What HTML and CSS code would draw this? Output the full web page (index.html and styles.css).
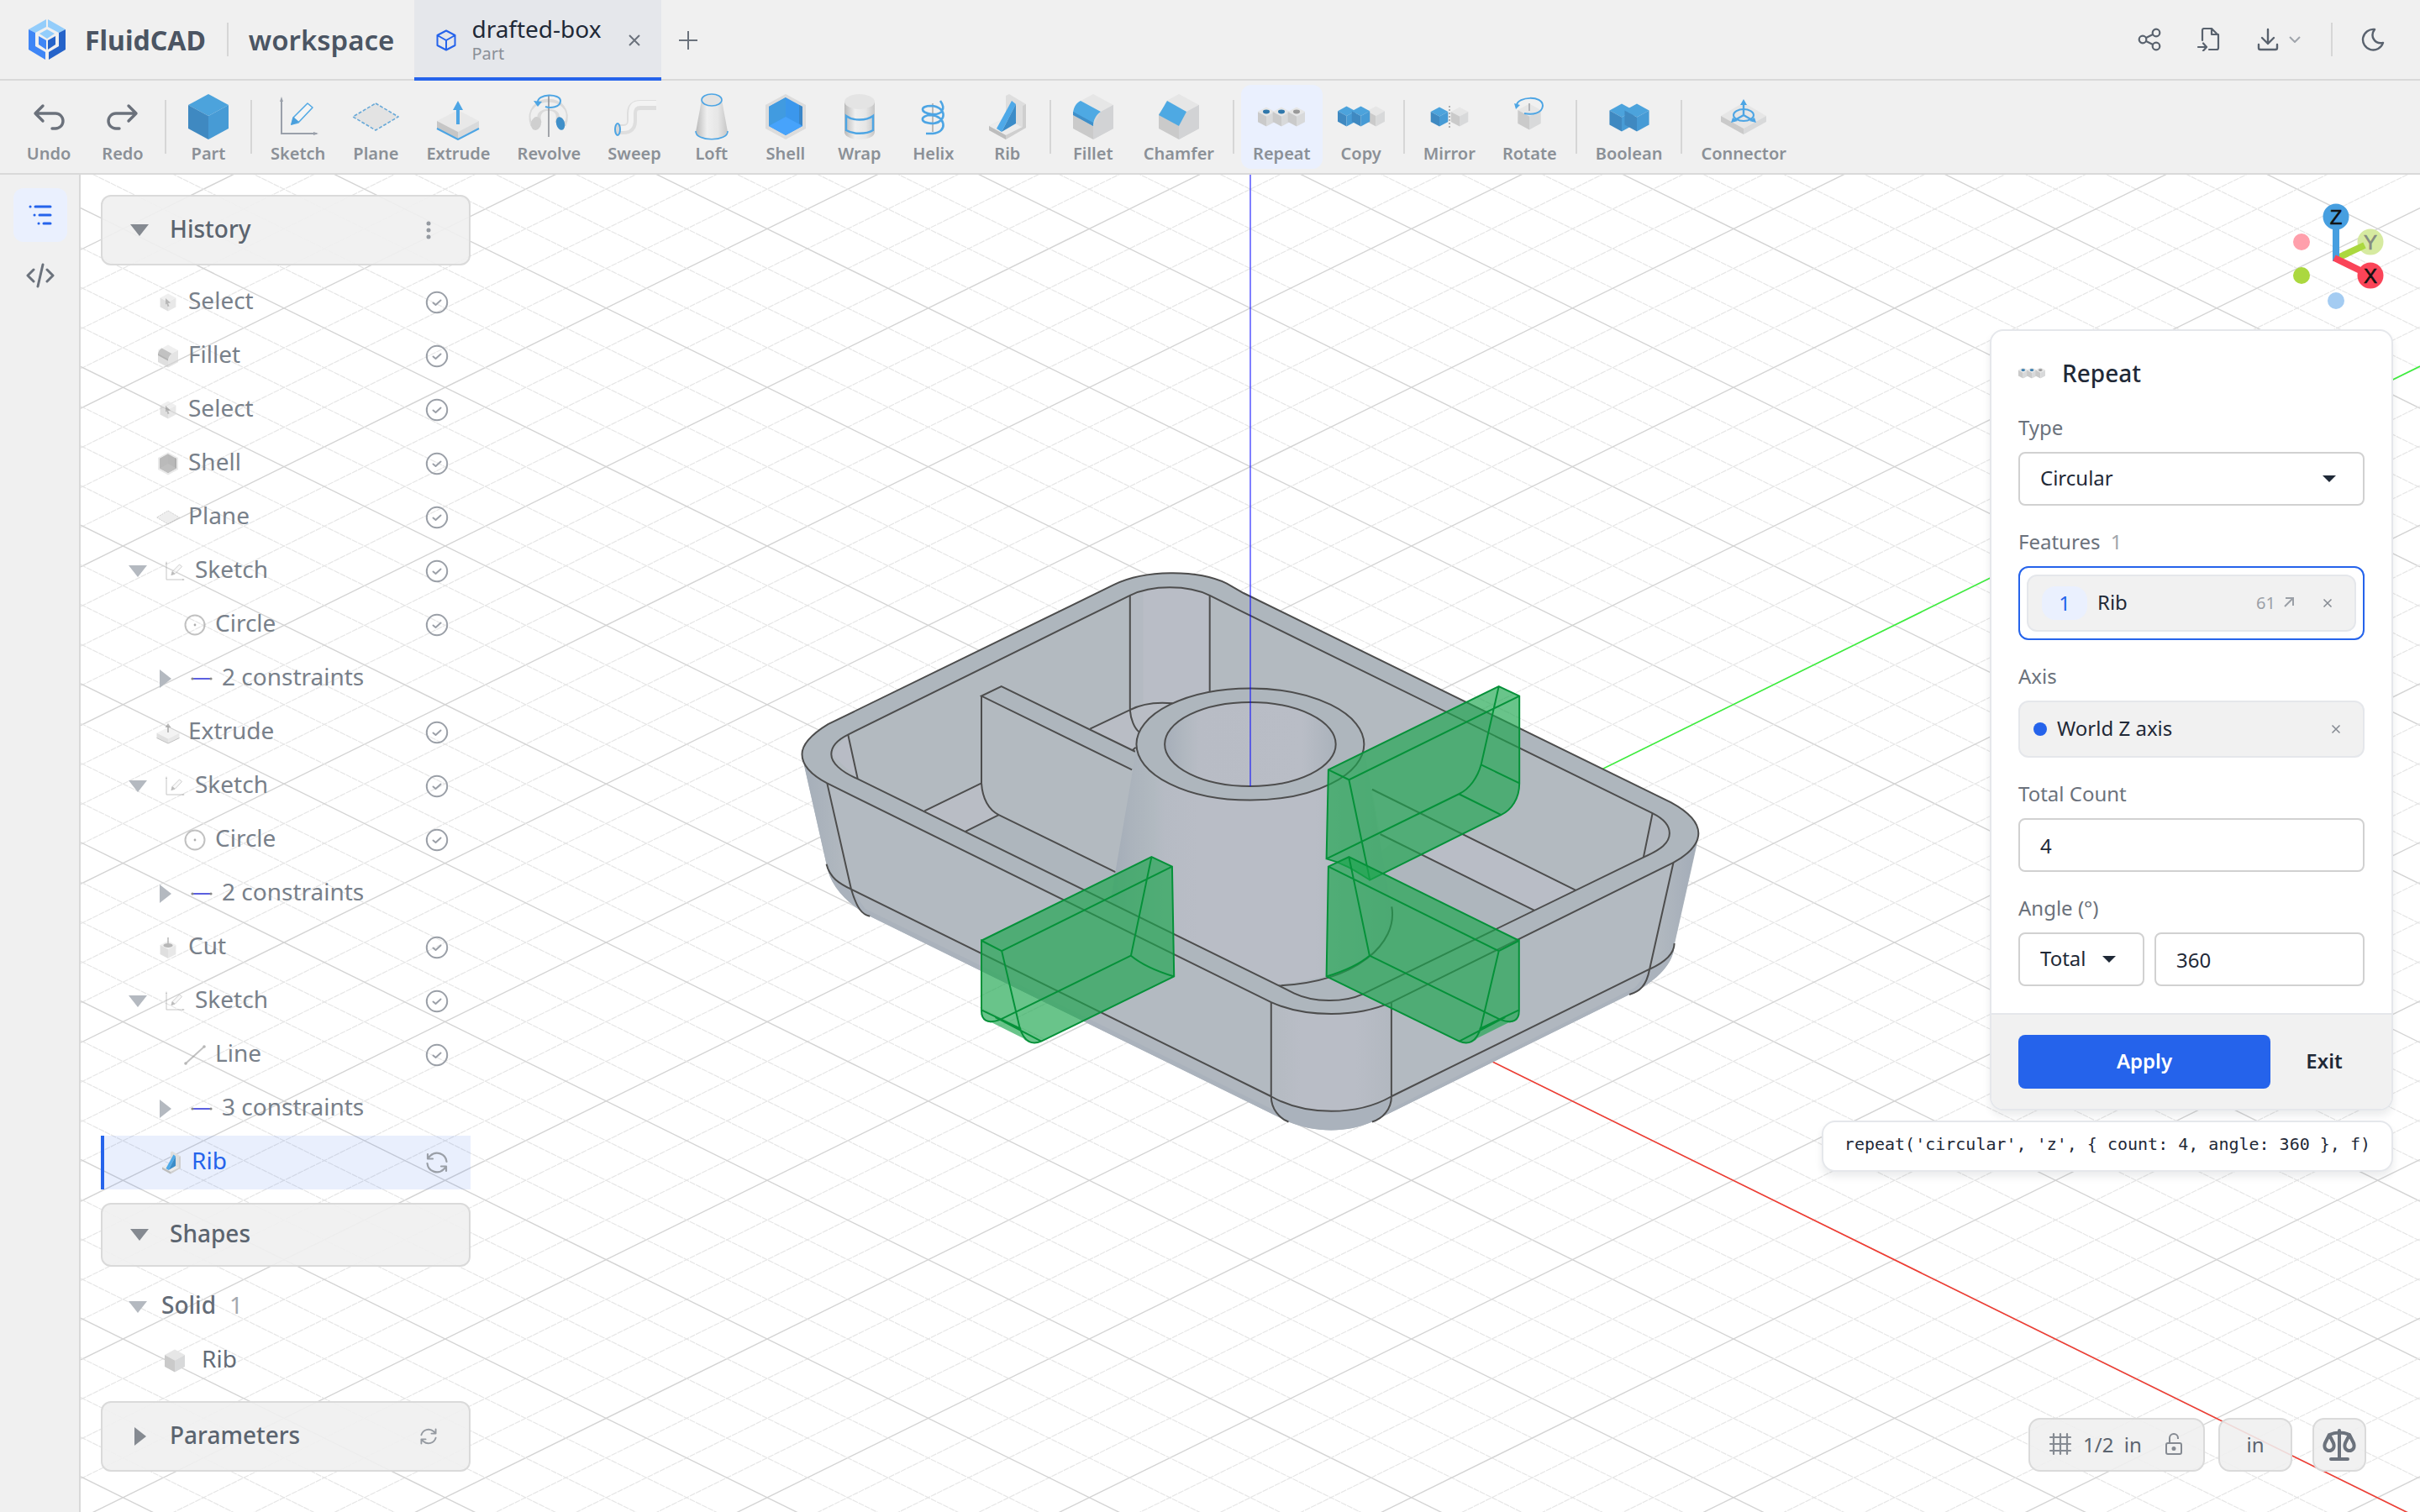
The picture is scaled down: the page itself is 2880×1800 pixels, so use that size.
FILE: index.html
```html
<!DOCTYPE html>
<html lang="en">
<head>
<meta charset="utf-8">
<title>FluidCAD – drafted-box</title>
<link rel="stylesheet" href="styles.css">
</head>
<body>
<svg class="defs" aria-hidden="true">
  <defs>
    <linearGradient id="metal" x1="0" x2="1" y1="0" y2="0"><stop offset="0" stop-color="#b9b9b9"/><stop offset=".35" stop-color="#efefef"/><stop offset=".7" stop-color="#e6e6e6"/><stop offset="1" stop-color="#c6c6c6"/></linearGradient>
    <symbol id="cube-blue" viewBox="0 0 56 56"><path fill="#4ca3dc" d="M28 1 52 14 28 27 4 14z"/><path fill="#3f89c1" d="M4 14 28 27V55L4 42z"/><path fill="#479bd5" d="M52 14 28 27V55L52 42z"/></symbol>
    <symbol id="cube-gray" viewBox="0 0 56 56"><path fill="#e6e6e6" d="M28 1 52 14 28 27 4 14z"/><path fill="#cacaca" d="M4 14 28 27V55L4 42z"/><path fill="#d8d9da" d="M52 14 28 27V55L52 42z"/></symbol>
    <symbol id="i-sketch" viewBox="0 0 56 56"><g fill="none" stroke="#9aa0aa" stroke-width="2"><path d="M8 8V48H50"/></g><path fill="#9aa0aa" d="M8 4 6 10h4zM52 48l-6-2v4z"/><path fill="#f4f4f4" stroke="#53a9e4" stroke-width="1.6" stroke-linejoin="round" d="M39 12 45 17 28 35 20 37 22 29z"/><path fill="#4a9fdc" d="M22 28 29 34 19 38z"/></symbol>
    <symbol id="i-plane" viewBox="0 0 56 56"><path fill="#e3e3e3" stroke="#69a9d8" stroke-width="1.6" stroke-dasharray="4 2" d="M28 12 55 28 28 44 1 28z"/></symbol>
    <symbol id="i-extrude" viewBox="0 0 56 56"><path fill="#e8e8e8" d="M28 20 53 33 28 46 3 33z"/><path fill="#c6c6c6" d="M3 33 28 46V55L3 42z"/><path fill="#d9dadb" d="M53 33 28 46V55L53 42z"/><path fill="none" stroke="#4da5e4" stroke-width="2" d="M3 42 28 55 53 42"/><path fill="#4da5e4" d="M26 37V20H22L28 9 34 20H30V37z"/></symbol>
    <symbol id="i-revolve" viewBox="0 0 56 56"><path fill="none" stroke="#dadada" stroke-width="14" d="M13 37C2 6 54 6 42 37"/><path fill="none" stroke="#efefef" stroke-width="8" d="M11 32C5 9 51 9 44 32"/><ellipse cx="13" cy="36" rx="6" ry="8" fill="#cfcfcf" transform="rotate(14 13 36)"/><ellipse cx="42" cy="36" rx="5" ry="8" fill="#3f8fc9" transform="rotate(-14 42 36)"/><path stroke="#8e9299" stroke-width="1.6" d="M28 2V52"/><path fill="none" stroke="#4da5e4" stroke-width="2" d="M15 11C14 0 42 0 42 9 42 17 30 18 24 16"/><path fill="#4da5e4" d="M10 9 20 10 15 16z"/></symbol>
    <symbol id="i-sweep" viewBox="0 0 56 56"><path fill="none" stroke="#dedede" stroke-width="12" d="M9 43H15Q25 43 25 33V24Q25 14 35 14H54"/><path fill="none" stroke="#f3f3f3" stroke-width="6" d="M9 42H15Q24 42 24 32V24Q24 12 35 12H54"/><ellipse cx="8" cy="43" rx="3" ry="7" fill="#d8d8d8" stroke="#4da5e4" stroke-width="2"/></symbol>
    <symbol id="i-loft" viewBox="0 0 56 56"><path fill="url(#metal)" d="M16 8 9 46C9 58 47 58 47 46L40 8z"/><path fill="none" stroke="#4da5e4" stroke-width="1.6" d="M9 45C8 58 48 58 47 45"/><ellipse cx="28" cy="8" rx="12" ry="7" fill="#e3e3e3" stroke="#4da5e4" stroke-width="1.6"/></symbol>
    <symbol id="i-shell" viewBox="0 0 56 56"><path fill="#dcdcdc" d="M28 1 52 14V42L28 55 4 42V14z"/><path fill="#3b97ec" d="M28 5 48 16V39L28 50 8 39V16z"/><path fill="#419be0" d="M28 5 8 16V39L28 28z"/><path fill="#47a3fb" d="M8 39 28 28 48 39 28 50z"/><path fill="#3a86c8" d="M48 16V39L44 36V14z"/></symbol>
    <symbol id="i-wrap" viewBox="0 0 56 56"><path fill="url(#metal)" d="M10 10V46C10 58 46 58 46 46V10z"/><ellipse cx="28" cy="10" rx="18" ry="9" fill="#e4e4e4"/><path fill="none" stroke="#4da5e4" stroke-width="2.4" d="M12 27C20 33 36 33 44 27V44C36 49 20 49 12 44z"/></symbol>
    <symbol id="i-helix" viewBox="0 0 56 56"><path stroke="#a3a3a3" stroke-width="1.4" d="M27 12V46"/><path fill="none" stroke="#4da5e4" stroke-width="2.6" d="M36 9C44 20 36 26 26 25 11 23 12 15 25 15 44 16 44 34 28 36 10 36 12 26 25 26 42 27 46 46 27 48H19"/></symbol>
    <symbol id="i-rib" viewBox="0 0 56 56"><path fill="#dedede" d="M26 3 30 1 50 13V41L26 55 6 44V39L26 29z"/><path fill="#ececec" d="M6 39 26 29 46 41 26 50z"/><path fill="#cfcfcf" d="M46 15 50 13V41L26 55V50L46 40z"/><path fill="#bdbdbd" d="M6 39 26 50V55L6 44z"/><path fill="#4ea9e8" d="M33 9 38 13 21 46 15 42z"/><path fill="#3b8cc8" d="M38 13V36L21 46z"/></symbol>
    <symbol id="i-fillet" viewBox="0 0 56 56"><use href="#cube-gray" width="56" height="56"/><path fill="#d2d3d5" d="M37 22 52 14V42L28 55V39z"/><path fill="#f0f0f0" d="M4 12 14 7 10 16 4 22z"/><path fill="#4ea9e3" d="M13 9 37 22C31 26 28 32 28 39L4 25C4 18 7 12 13 9z"/><path fill="#3f8fc9" d="M4 22 28 35V39L4 26z"/></symbol>
    <symbol id="i-chamfer" viewBox="0 0 56 56"><use href="#cube-gray" width="56" height="56"/><path fill="#d2d3d5" d="M37 22 52 14V42L28 55V39z"/><path fill="#f0f0f0" d="M4 12 14 7 8 20 4 25z"/><path fill="#4ea9e3" d="M14 9 37 22 28 39 4 26z"/></symbol>
    <symbol id="i-repeat" viewBox="0 0 56 56"><use href="#cube-gray" x="-2" y="16" width="24" height="24"/><use href="#cube-gray" x="16" y="16" width="24" height="24"/><use href="#cube-gray" x="34" y="16" width="24" height="24"/><ellipse cx="10" cy="22" rx="4" ry="2.4" fill="#2f77ab"/><ellipse cx="28" cy="22" rx="4" ry="2.4" fill="#2f77ab"/><ellipse cx="46" cy="22" rx="4" ry="2.4" fill="#999"/></symbol>
    <symbol id="i-copy" viewBox="0 0 56 56"><use href="#cube-gray" x="33" y="15" width="25" height="25"/><use href="#cube-blue" x="-2" y="15" width="25" height="25"/><use href="#cube-blue" x="15" y="15" width="25" height="25"/></symbol>
    <symbol id="i-mirror" viewBox="0 0 56 56"><use href="#cube-blue" x="4" y="16" width="24" height="24"/><use href="#cube-gray" x="28" y="16" width="24" height="24"/><path stroke="#b0b0b0" stroke-width="2" stroke-dasharray="2 2" d="M28 15V41"/></symbol>
    <symbol id="i-rotate" viewBox="0 0 56 56"><use href="#cube-gray" x="12" y="12" width="32" height="32"/><path stroke="#8e9299" stroke-width="1.2" d="M28 12V21"/><path fill="none" stroke="#4da5e4" stroke-width="2" d="M13 14C14 4 44 2 44 15 43 24 32 26 22 24"/><path fill="#4da5e4" d="M10 12 17 14 12 19z"/></symbol>
    <symbol id="i-boolean" viewBox="0 0 56 56"><use href="#cube-blue" x="2" y="12" width="34" height="34"/><use href="#cube-blue" x="20" y="12" width="34" height="34"/></symbol>
    <symbol id="i-connector" viewBox="0 0 56 56"><path fill="#e6e6e6" d="M28 11 55 27 28 42 1 27z"/><path fill="#cacaca" d="M1 27 28 42V49L1 34z"/><path fill="#d8d9da" d="M55 27 28 42V49L55 34z"/><g fill="none" stroke="#4da5e4" stroke-width="2"><ellipse cx="28" cy="26" rx="12" ry="7"/><path stroke-width="2.4" d="M28 12V26L16 33M28 26 40 33"/></g><path fill="#4da5e4" d="M28 7 24 14H32zM13 35 15 29 21 33zM43 35 35 33 41 29z"/></symbol>
    <symbol id="i-select" viewBox="0 0 56 56"><use href="#cube-gray" x="6" y="6" width="44" height="44"/><path fill="#888" d="M22 18 34 29 28 30 31 37 27 38 25 31 22 33z"/></symbol>
    <symbol id="i-cut" viewBox="0 0 56 56"><use href="#cube-gray" x="6" y="11" width="44" height="44"/><ellipse cx="28" cy="23" rx="11" ry="5" fill="#888"/><path stroke="#888" stroke-width="3" d="M28 4V20"/></symbol>
    <symbol id="i-extrude-small" viewBox="0 0 56 56"><path fill="#ececec" d="M28 16 55 29 28 43 1 29z"/><path fill="#cdcdcd" d="M1 29 28 43V54L1 41z"/><path fill="#d9dadb" d="M55 29 28 43V54L55 41z"/><path fill="none" stroke="#999" stroke-width="2" d="M1 41 28 54 55 41"/><path fill="#8e8e8e" d="M26 28V16H21L28 6 35 16H30V28z"/></symbol>
    <symbol id="i-circle" viewBox="0 0 28 28"><circle cx="14" cy="14" r="11.5" fill="none" stroke="#999" stroke-width="2"/><circle cx="14" cy="14" r="1.4" fill="#777"/></symbol>
    <symbol id="i-line" viewBox="0 0 28 28"><path stroke="#999" stroke-width="2" d="M3 24 25 4"/><circle cx="3" cy="24" r="1.8" fill="#888"/><circle cx="25" cy="4" r="1.8" fill="#888"/></symbol>
    <symbol id="i-cons" viewBox="0 0 28 28"><path stroke="#5b5fe0" stroke-width="2" d="M3 14H25"/><circle cx="3" cy="14" r="1.6" fill="#888"/><circle cx="25" cy="14" r="1.6" fill="#888"/></symbol>
    <symbol id="i-check" viewBox="0 0 28 28"><g fill="none" stroke="currentColor" stroke-width="2" stroke-linecap="round" stroke-linejoin="round"><circle cx="14" cy="14" r="12.2"/><path d="M9.500 14.500 12.500 17 18.500 11.500"/></g></symbol>
    <symbol id="i-refresh" viewBox="0 0 28 28"><g fill="none" stroke="currentColor" stroke-width="2.2" stroke-linecap="round" stroke-linejoin="round"><path d="M2.500 15A11.500 11.500 0 0 0 22 22L25 19M25.500 13A11.500 11.500 0 0 0 6 6L3 9M3 4V9.500H9M25 24V18.500H19"/></g></symbol>
    <symbol id="i-reload" viewBox="0 0 28 28"><g fill="none" stroke="currentColor" stroke-width="2.200" stroke-linecap="round" stroke-linejoin="round"><path d="M4 12A10.500 10.500 0 0 1 21 7L24 10M24 16A10.500 10.500 0 0 1 7 21L4 18M24 4V10H18M4 24V18H10"/></g></symbol>
    <symbol id="t-down" viewBox="0 0 22 14"><path fill="currentColor" d="M0 0H22L11 14z"/></symbol>
    <symbol id="t-right" viewBox="0 0 14 22"><path fill="currentColor" d="M0 0 14 11 0 22z"/></symbol>
    <symbol id="i-x" viewBox="0 0 16 16"><path fill="none" stroke="currentColor" stroke-width="2" d="M2 2 14 14M14 2 2 14"/></symbol>
  </defs>
</svg>

<header class="topbar">
  <div class="brand">
    <svg class="logo" viewBox="0 0 44 48"><path fill="#93cdfb" d="M21 0V9L8 16 0 12zM23 0V9L36 16 44 12z"/><path fill="#3f86f6" d="M0 12 8 16V32L20 39V48L0 36z"/><path fill="#2563c9" d="M44 12 36 16V32L24 39V48L44 36z"/><path fill="#93cdfb" d="M22 12 31 17 22 23 13 17z"/><path fill="#3f86f6" d="M12 20 21 25V36L12 30z"/><path fill="#2563c9" d="M32 20 23 25V36L32 30z"/></svg>
    <span class="brand-name">FluidCAD</span>
    <span class="rule"></span>
    <a class="workspace" href="#">workspace</a>
  </div>
  <nav class="tabs">
    <div class="tab">
      <svg class="tab-icon" viewBox="0 0 24 26" fill="none" stroke="currentColor" stroke-width="2" stroke-linejoin="round"><path d="M12 1.500 22.500 7V19L12 24.500 1.500 19V7zM1.500 7 12 13 22.500 7M12 13V24.500"/></svg>
      <a class="tab-text" href="#"><span class="tab-title">drafted-box</span><span class="tab-kind">Part</span></a>
      <button class="icon-btn" aria-label="Close tab"><svg width="16" height="16"><use href="#i-x"/></svg></button>
    </div>
    <button class="icon-btn add" aria-label="New tab"><svg width="22" height="22" viewBox="0 0 22 22"><path stroke="currentColor" stroke-width="2" d="M11 0V22M0 11H22"/></svg></button>
  </nav>
  <div class="actions">
    <button class="icon-btn" aria-label="Share"><svg width="28" height="28" viewBox="0 0 28 28" fill="none" stroke="currentColor" stroke-width="2.200"><circle cx="6" cy="14" r="4.300"/><circle cx="22" cy="6" r="4.300"/><circle cx="22" cy="22" r="4.300"/><path d="M10 12 18 8M10 16 18 20"/></svg></button>
    <button class="icon-btn" aria-label="Import"><svg width="28" height="28" viewBox="0 0 28 28" fill="none" stroke="currentColor" stroke-width="2.200" stroke-linecap="round" stroke-linejoin="round"><path d="M7 15V3Q7 1 9 1H18L26 9V24Q26 26 24 26H15M18 1V8H26M2 23H12M8 18.500 12 23 8 27.500"/></svg></button>
    <button class="icon-btn export" aria-label="Export"><svg width="26" height="28" viewBox="0 0 26 28" fill="none" stroke="currentColor" stroke-width="2.400" stroke-linecap="round" stroke-linejoin="round"><path d="M13 2V19M6 12 13 19 20 12M2 20V24Q2 26 4 26H22Q24 26 24 24V20"/></svg><svg class="faint" width="14" height="8" viewBox="0 0 14 8" fill="none" stroke="currentColor" stroke-width="2"><path d="M1 1 7 7 13 1"/></svg></button>
    <span class="rule"></span>
    <button class="icon-btn" aria-label="Dark mode"><svg width="28" height="28" viewBox="0 0 28 28" fill="none" stroke="currentColor" stroke-width="2.400" stroke-linejoin="round"><path d="M16 2A12.300 12.300 0 1 0 26 18C16 20 10 10 16 2z"/></svg></button>
  </div>
</header>

<div class="toolbar" role="toolbar">
  <button class="tool"><svg viewBox="0 0 56 56" fill="none" stroke="#6b717b" stroke-width="3.400" stroke-linecap="round" stroke-linejoin="round"><path d="M21 15 12 24 21 33M12 24H36A8.500 8.500 0 0 1 36 42H32"/></svg>Undo</button>
  <button class="tool"><svg viewBox="0 0 56 56" fill="none" stroke="#6b717b" stroke-width="3.400" stroke-linecap="round" stroke-linejoin="round"><path d="M35 15 44 24 35 33M44 24H20A8.500 8.500 0 0 0 20 42H24"/></svg>Redo</button>
  <span class="rule"></span>
  <button class="tool"><svg><use href="#cube-blue"/></svg>Part</button>
  <span class="rule"></span>
  <button class="tool"><svg><use href="#i-sketch"/></svg>Sketch</button>
  <button class="tool"><svg><use href="#i-plane"/></svg>Plane</button>
  <button class="tool"><svg><use href="#i-extrude"/></svg>Extrude</button>
  <button class="tool"><svg><use href="#i-revolve"/></svg>Revolve</button>
  <button class="tool"><svg><use href="#i-sweep"/></svg>Sweep</button>
  <button class="tool"><svg><use href="#i-loft"/></svg>Loft</button>
  <button class="tool"><svg><use href="#i-shell"/></svg>Shell</button>
  <button class="tool"><svg><use href="#i-wrap"/></svg>Wrap</button>
  <button class="tool"><svg><use href="#i-helix"/></svg>Helix</button>
  <button class="tool"><svg><use href="#i-rib"/></svg>Rib</button>
  <span class="rule"></span>
  <button class="tool"><svg><use href="#i-fillet"/></svg>Fillet</button>
  <button class="tool"><svg><use href="#i-chamfer"/></svg>Chamfer</button>
  <span class="rule"></span>
  <button class="tool active"><svg><use href="#i-repeat"/></svg>Repeat</button>
  <button class="tool"><svg><use href="#i-copy"/></svg>Copy</button>
  <span class="rule"></span>
  <button class="tool"><svg><use href="#i-mirror"/></svg>Mirror</button>
  <button class="tool"><svg><use href="#i-rotate"/></svg>Rotate</button>
  <span class="rule"></span>
  <button class="tool"><svg><use href="#i-boolean"/></svg>Boolean</button>
  <span class="rule"></span>
  <button class="tool"><svg><use href="#i-connector"/></svg>Connector</button>
</div>

<div class="work">
  <nav class="rail">
    <button class="rail-btn active" aria-label="Feature tree"><svg width="28" height="24" viewBox="0 0 28 24" stroke="currentColor" stroke-width="3" stroke-linecap="round"><path d="M8 2H26M13 12H26M18 22H26M2 2H2.100M7 12H7.100M12 22H12.100"/></svg></button>
    <button class="rail-btn" aria-label="Code"><svg width="34" height="30" viewBox="0 0 34 30" fill="none" stroke="currentColor" stroke-width="3" stroke-linecap="round" stroke-linejoin="round"><path d="M9 8 2 15 9 22M25 8 32 15 25 22M20 2 14 28"/></svg></button>
  </nav>

  <main class="viewport">
    <svg class="scene" viewBox="96 208 2784 1592" preserveAspectRatio="xMidYMid slice" aria-hidden="true">
      <defs>
        <g id="grid4">
          <path stroke="#d4d4d4" stroke-width="1.400" d="M96 436.400 2880 1807.600M96 1807.600 2880 436.400"/>
          <path stroke="#e6e6e6" stroke-width="1.200" stroke-dasharray="7 1" d="M96 483.600 2880 1854.800M96 1854.800 2880 483.600M96 530.800 2880 1902M96 1902 2880 530.800M96 578 2880 1949.200M96 1949.200 2880 578"/>
        </g>
        <linearGradient id="boss" gradientUnits="userSpaceOnUse" x1="1035" x2="1901" y1="0" y2="0"><stop offset="0" stop-color="#a4adb8"/><stop offset=".06" stop-color="#abb3bc"/><stop offset=".14" stop-color="#b1b9c0"/><stop offset=".18" stop-color="#b6bbc4"/><stop offset=".3" stop-color="#b9bdc6"/><stop offset=".72" stop-color="#b9bdc6"/><stop offset=".85" stop-color="#b2b9c1"/><stop offset="1" stop-color="#a8b0ba"/></linearGradient>
        <linearGradient id="bore" gradientUnits="userSpaceOnUse" x1="1192" x2="1724" y1="0" y2="0"><stop offset="0" stop-color="#a6aeb9"/><stop offset=".12" stop-color="#b1b8c0"/><stop offset=".2" stop-color="#b8bcc5"/><stop offset=".8" stop-color="#b9bdc6"/><stop offset="1" stop-color="#aab2bb"/></linearGradient>
        <linearGradient id="cornerL" gradientUnits="userSpaceOnUse" x1="70" x2="200" y1="0" y2="0"><stop offset="0" stop-color="#a5aeb9"/><stop offset="1" stop-color="#b2b9c0"/></linearGradient>
        <linearGradient id="cornerR" gradientUnits="userSpaceOnUse" x1="2720" x2="2850" y1="0" y2="0"><stop offset="0" stop-color="#b2b9c0"/><stop offset="1" stop-color="#a3acb8"/></linearGradient>
        <linearGradient id="cornerF" gradientUnits="userSpaceOnUse" x1="1523" x2="1897" y1="0" y2="0"><stop offset="0" stop-color="#b4bac1"/><stop offset=".25" stop-color="#b9bdc6"/><stop offset=".7" stop-color="#b9bdc6"/><stop offset="1" stop-color="#b2b8c0"/></linearGradient>
        <clipPath id="cavity"><path d="M155 540C155 518 175 502 207 489L1084 128C1150 100 1265 100 1332 128L1437 172 2709 693C2745 708 2762 727 2762 745 2762 770 2735 787 2681 807L1807 1162C1750 1184 1655 1184 1595 1160L1547 1140 235 603C185 585 155 562 155 540z"/></clipPath>
        <g id="ghost">
          <path class="ghost-fill" d="M622 1023 1151 806 1215 831 1221 1116 808 1284C790 1292 765 1290 752 1276L655 1236C635 1236 622 1225 622 1210z"/>
          <path class="ghost-line" d="M622 1023 1151 806 1215 831 1221 1116 808 1284C785 1292 755 1292 740 1245L685 1050 622 1023V1205C622 1230 640 1240 680 1228L1087 1062 1151 806M685 1050 1215 831M1087 1062C1120 1085 1170 1103 1221 1116M622 1203 745 1252M680 1228 808 1284M665 1222 745 1254"/>
        </g>
      </defs>

      <g fill="none">
        <use href="#grid4" y="-1510.400"/><use href="#grid4" y="-1321.600"/><use href="#grid4" y="-1132.800"/><use href="#grid4" y="-944"/><use href="#grid4" y="-755.200"/><use href="#grid4" y="-566.400"/><use href="#grid4" y="-377.600"/><use href="#grid4" y="-188.800"/><use href="#grid4"/><use href="#grid4" y="188.800"/><use href="#grid4" y="377.600"/><use href="#grid4" y="566.400"/><use href="#grid4" y="755.200"/><use href="#grid4" y="944"/><use href="#grid4" y="1132.800"/><use href="#grid4" y="1321.600"/>
      </g>
      <path stroke="#3cf03c" stroke-width="1.600" d="M1488 1122 2880 436"/>
      <path stroke="#f03c32" stroke-width="1.600" d="M1488 1122 2880 1808"/>

      <g class="model" transform="translate(930 650) scale(.38265 .45918)">
        <!-- outer body -->
        <path fill="#b3bac1" d="M64 540C64 515 90 490 145 462L1035 100C1130 62 1290 60 1385 97L1437 122 2767 665C2822 690 2852 718 2852 745L2847 775 2777 1035C2775 1080 2730 1125 2637 1163L1837 1493C1760 1522 1660 1522 1577 1493L275 960C200 925 150 880 140 825L70 565z"/>
        <path fill="url(#cornerL)" d="M64 545 140 825C150 860 180 875 217 890L142 617z"/>
        <path fill="url(#cornerR)" d="M2852 750 2777 1030C2777 1055 2750 1078 2700 1097L2774 821z"/>
        <path fill="#aab2bc" d="M140 825C150 860 180 875 217 890L1523 1427C1630 1478 1790 1478 1897 1427L2700 1097C2750 1078 2777 1055 2777 1035 2775 1080 2730 1125 2637 1163L1837 1493C1760 1522 1660 1522 1577 1493L275 960C200 925 150 880 140 825z"/>
        <path fill="#b0b7bf" d="M217 890 1523 1427C1530 1450 1540 1465 1550 1470L260 940zM2700 1097 1897 1427C1890 1450 1880 1465 1870 1470L2655 1145z"/>
        <path fill="url(#cornerF)" d="M1523 1183V1427C1630 1478 1790 1478 1897 1427V1183C1790 1223 1630 1223 1523 1183z"/>
        <!-- rim -->
        <path class="edge-line" fill="#aeb6bd" d="M64 540C64 515 90 490 145 462L1035 100C1130 62 1290 60 1385 97L1437 122 2767 665C2822 690 2852 718 2852 745 2852 770 2830 795 2774 821L1897 1183C1790 1223 1630 1223 1523 1183L142 615C90 592 64 565 64 540z"/>
        <g clip-path="url(#cavity)">
          <path fill="#b3bac0" d="M100 50H2852V1250H100z"/>
          <path fill="#b8bcc5" d="M155 540 207 489 237 603z"/>
          <path fill="#b2b8c0" d="M2762 745 2709 693 2681 807z"/>
          <path fill="#b9bdc6" d="M1120 100H1332V500H1120z"/>
          <path fill="#b4bac2" d="M1084 100H1125V500H1084z"/>
          <path fill="#b9bdc5" d="M445 687 960 474 1084 425C1130 405 1180 405 1217 408L1400 600 1100 700 572 740z"/>
          <path fill="#aeb6bd" d="M572 740 676 697 1500 1040 2000 700 2342 945 1712 1230z"/>
          <path fill="#b9bdc6" d="M1837 631 2472 893 2342 945 1862 747z"/>
          <path class="edge" d="M445 687 622 615M572 740 676 697M1084 128V425C1086 450 1098 472 1112 482M1084 425 960 474M1084 425C1130 405 1180 405 1217 408M1332 128V400M207 489 237 603M2709 693 2681 807M1837 631 2472 893M1862 747 2342 945M1088 532 1102 522"/>
          <!-- rib -->
          <path fill="#b3bac0" d="M622 389 1095 580 1040 846 676 697C645 685 622 655 622 615z"/>
          <path fill="#aeb6bd" d="M622 389 684 364 1110 537 1095 582z"/>
          <path class="edge" d="M1090 580 622 389 684 364 1100 533M622 389V615C625 655 645 685 676 697L1040 846"/>
          <!-- boss -->
          <path fill="url(#boss)" d="M1104 525 1015 960C1015 1200 1901 1200 1901 960L1812 525z"/>
          <path class="edge" d="M1898 935C1918 1030 1790 1130 1547 1140"/>
        </g>
        <ellipse cx="1458" cy="514" rx="354" ry="145" fill="#aeb6bd" class="edge-line"/>
        <ellipse cx="1458" cy="514" rx="266" ry="109" fill="url(#bore)" class="edge-line"/>
        <path class="edge" d="M155 540C155 518 175 502 207 489L1084 128C1150 100 1265 100 1332 128L1437 172 2709 693C2745 708 2762 727 2762 745 2762 770 2735 787 2681 807L1807 1162C1750 1184 1655 1184 1595 1160L1547 1140 235 603C185 585 155 562 155 540z"/>
        <path class="edge" d="M142 615 217 890C235 940 250 955 275 960M140 825C150 860 180 875 217 890L1523 1427C1630 1478 1790 1478 1897 1427L2700 1097C2750 1078 2777 1055 2777 1030M1523 1183V1427C1523 1460 1550 1485 1577 1493M1897 1183V1427C1897 1460 1870 1485 1837 1493M2774 821 2700 1097C2690 1140 2670 1155 2637 1163"/>
        <!-- pattern preview -->
        <path class="ghost-fill" d="M1701 580 2231 364 2295 389V615C2295 655 2270 685 2238 697L1830 866C1790 845 1750 822 1695 811z"/>
        <path class="ghost-line" d="M1830 866C1790 845 1750 822 1695 811L1701 580 2231 364 2295 389V615C2295 655 2270 685 2238 697L1830 866 1765 606 2295 389M1701 580 1765 606M2231 364 2176 567C2165 600 2140 630 2107 643L1695 811M2176 567 2295 615M2107 643 2238 697"/>
        <use href="#ghost"/>
        <use href="#ghost" transform="translate(2916 0) scale(-1 1)"/>
      </g>
      <path stroke="#0000ff" stroke-opacity=".5" stroke-width="2" d="M1488 208V936"/>
    </svg>

    <aside class="side">
      <section>
        <h2 class="panel-head tall"><svg class="down"><use href="#t-down"/></svg><span>History</span><button class="icon-btn" aria-label="History menu"><svg width="6" height="22" viewBox="0 0 6 22" fill="currentColor"><circle cx="3" cy="3" r="2.500"/><circle cx="3" cy="11" r="2.500"/><circle cx="3" cy="19" r="2.500"/></svg></button></h2>
        <ul class="tree">
          <li class="row l1"><svg class="ico"><use href="#i-select"/></svg><span>Select</span><svg class="state"><use href="#i-check"/></svg></li>
          <li class="row l1"><svg class="ico"><use href="#i-fillet"/></svg><span>Fillet</span><svg class="state"><use href="#i-check"/></svg></li>
          <li class="row l1"><svg class="ico"><use href="#i-select"/></svg><span>Select</span><svg class="state"><use href="#i-check"/></svg></li>
          <li class="row l1"><svg class="ico"><use href="#i-shell"/></svg><span>Shell</span><svg class="state"><use href="#i-check"/></svg></li>
          <li class="row l1"><svg class="ico"><use href="#i-plane"/></svg><span>Plane</span><svg class="state"><use href="#i-check"/></svg></li>
          <li class="row group"><svg class="down"><use href="#t-down"/></svg><svg class="ico"><use href="#i-sketch"/></svg><span>Sketch</span><svg class="state"><use href="#i-check"/></svg></li>
          <li class="row l2"><svg class="ico"><use href="#i-circle"/></svg><span>Circle</span><svg class="state"><use href="#i-check"/></svg></li>
          <li class="row cons"><svg class="right"><use href="#t-right"/></svg><svg class="glyph"><use href="#i-cons"/></svg><span>2 constraints</span></li>
          <li class="row l1"><svg class="ico"><use href="#i-extrude-small"/></svg><span>Extrude</span><svg class="state"><use href="#i-check"/></svg></li>
          <li class="row group"><svg class="down"><use href="#t-down"/></svg><svg class="ico"><use href="#i-sketch"/></svg><span>Sketch</span><svg class="state"><use href="#i-check"/></svg></li>
          <li class="row l2"><svg class="ico"><use href="#i-circle"/></svg><span>Circle</span><svg class="state"><use href="#i-check"/></svg></li>
          <li class="row cons"><svg class="right"><use href="#t-right"/></svg><svg class="glyph"><use href="#i-cons"/></svg><span>2 constraints</span></li>
          <li class="row l1"><svg class="ico"><use href="#i-cut"/></svg><span>Cut</span><svg class="state"><use href="#i-check"/></svg></li>
          <li class="row group"><svg class="down"><use href="#t-down"/></svg><svg class="ico"><use href="#i-sketch"/></svg><span>Sketch</span><svg class="state"><use href="#i-check"/></svg></li>
          <li class="row l2"><svg class="ico"><use href="#i-line"/></svg><span>Line</span><svg class="state"><use href="#i-check"/></svg></li>
          <li class="row cons"><svg class="right"><use href="#t-right"/></svg><svg class="glyph"><use href="#i-cons"/></svg><span>3 constraints</span></li>
          <li class="row l1 current"><svg class="glyph"><use href="#i-rib"/></svg><span>Rib</span><svg class="state"><use href="#i-refresh"/></svg></li>
        </ul>
      </section>
      <section>
        <h2 class="panel-head"><svg class="down"><use href="#t-down"/></svg><span>Shapes</span></h2>
        <ul class="tree shapes">
          <li class="row group solid"><svg class="down"><use href="#t-down"/></svg><span>Solid</span><small>1</small></li>
          <li class="row shape"><svg class="glyph"><use href="#cube-gray"/></svg><span>Rib</span></li>
        </ul>
      </section>
      <section>
        <h2 class="panel-head tall"><svg class="right"><use href="#t-right"/></svg><span>Parameters</span><button class="icon-btn" aria-label="Reload parameters"><svg width="24" height="24"><use href="#i-reload"/></svg></button></h2>
      </section>
    </aside>

    <aside class="tools-col">
      <svg class="gizmo" width="136" height="160" viewBox="0 0 136 160" role="img" aria-label="View orientation">
        <circle cx="27" cy="56" r="10" fill="#ff9fab"/><circle cx="27" cy="96" r="10" fill="#abd83f"/><circle cx="68" cy="126" r="10" fill="#a4ccf2"/>
        <circle cx="109" cy="56" r="15.500" fill="#d6eaa0"/>
        <path stroke="#abd83f" stroke-width="8" d="M68 76 102 60"/><path stroke="#479fe0" stroke-width="8" d="M68 79V30"/><path stroke="#fa4458" stroke-width="8" d="M66 75 105 94"/>
        <circle cx="68" cy="26" r="15.500" fill="#479fe0"/><circle cx="109" cy="96" r="15.500" fill="#fa4458"/>
        <g class="gizmo-text"><text x="68" y="35">Z</text><text x="109" y="65" class="dim">Y</text><text x="109" y="105">X</text></g>
      </svg>

      <form class="card">
        <div class="card-body">
          <h2 class="card-title"><svg class="title-icon"><use href="#i-repeat"/></svg>Repeat</h2>
          <div class="field">
            <label for="type">Type</label>
            <div class="select"><select id="type"><option>Circular</option></select><svg width="16" height="8" viewBox="0 0 16 8"><path fill="currentColor" d="M0 0H16L8 8z"/></svg></div>
          </div>
          <div class="field">
            <div class="label">Features <small>1</small></div>
            <div class="picker"><div class="chip"><span class="badge">1</span><span class="grow">Rib</span><a class="line-ref" href="#">61 <svg width="12" height="12" viewBox="0 0 12 12" fill="none" stroke="currentColor" stroke-width="2"><path d="M1 11 11 1M2 1H11V10"/></svg></a><button type="button" class="icon-btn" aria-label="Remove Rib"><svg width="12" height="12"><use href="#i-x"/></svg></button></div></div>
          </div>
          <div class="field">
            <div class="label">Axis</div>
            <div class="chip axis"><span class="dot"></span><span class="grow">World Z axis</span><button type="button" class="icon-btn" aria-label="Remove axis"><svg width="12" height="12"><use href="#i-x"/></svg></button></div>
          </div>
          <div class="field">
            <label for="count">Total Count</label>
            <input id="count" type="text" value="4">
          </div>
          <div class="field">
            <label for="angle">Angle (°)</label>
            <div class="pair">
              <div class="select"><select aria-label="Angle mode"><option>Total</option></select><svg width="16" height="8" viewBox="0 0 16 8"><path fill="currentColor" d="M0 0H16L8 8z"/></svg></div>
              <input id="angle" type="text" value="360">
            </div>
          </div>
        </div>
        <div class="card-foot"><button type="button" class="primary">Apply</button><button type="button" class="plain">Exit</button></div>
      </form>

      <code class="snippet">repeat('circular', 'z', { count: 4, angle: 360 }, f)</code>

      <div class="status">
        <button class="pill snap"><svg width="28" height="28" viewBox="0 0 28 28" stroke="currentColor" stroke-width="2.200" stroke-linecap="round"><path d="M6 2V26M14 2V26M22 2V26M2 6H26M2 14H26M2 22H26"/></svg><span>1/2&nbsp; in</span><svg width="20" height="26" viewBox="0 0 20 26" fill="none" stroke="currentColor" stroke-width="2"><rect x="1" y="12" width="18" height="13" rx="2"/><path d="M5 12V6A5 5 0 0 1 15 6V7"/><circle cx="10" cy="18.500" r="1.500" fill="currentColor"/></svg></button>
        <button class="pill unit">in</button>
        <button class="pill scale" aria-label="Measure mass"><svg width="42" height="40" viewBox="0 0 42 40" fill="none" stroke="currentColor" stroke-width="4" stroke-linecap="round" stroke-linejoin="round"><path d="M21 3V37M11 37H31M9 8Q21 3 33 8M9 8 4 18C0 30 18 30 14 18zM33 8 28 18C24 30 42 30 38 18z"/></svg></button>
      </div>
    </aside>
  </main>
</div>
</body>
</html>
```
FILE: styles.css
```css
* { box-sizing: border-box; }
body {
  margin: 0;
  min-height: 100vh;
  display: flex;
  flex-direction: column;
  font-family: "Noto Sans", sans-serif;
  font-size: 24px;
  color: #1f2937;
  background: #f0f0f0;
}
button, input, select { font: inherit; color: inherit; margin: 0; }
button { border: 0; background: none; padding: 0; }
a { color: inherit; text-decoration: none; }
h2 { margin: 0; font-weight: 500; }
ul { margin: 0; padding: 0; list-style: none; }
svg { display: block; flex: none; }
.defs { position: absolute; width: 0; height: 0; }
.rule { width: 2px; background: #d6d6d6; flex: none; }
.icon-btn { display: flex; align-items: center; justify-content: center; color: #6b727c; }

/* top bar */
.topbar { display: flex; height: 96px; border-bottom: 2px solid #d9d9d9; }
.brand { display: flex; align-items: center; padding: 0 24px 0 34px; font-size: 32px; font-weight: 700; color: #4b5563; }
.logo { width: 44px; height: 48px; }
.brand-name { margin: 0 25px 0 23px; }
.topbar .rule { height: 40px; }
.workspace { margin-left: 24px; font-size: 33px; font-weight: 600; }
.tabs { display: flex; flex: 1; align-items: stretch; margin-bottom: -2px; }
.tab { display: flex; align-items: center; width: 294px; padding: 4px 24px 0 26px; background: #e5e7eb; border-bottom: 4px solid #2563eb; }
.tab-icon { width: 24px; height: 26px; color: #2563eb; }
.tab-text { flex: 1; display: flex; flex-direction: column; margin-left: 18px; }
.tab-title { font-size: 28px; line-height: 32px; }
.tab-kind { font-size: 20px; line-height: 28px; color: #8b9098; }
.add { margin-left: 21px; }
.actions { display: flex; align-items: center; gap: 42px; padding-right: 42px; }
.actions .icon-btn { color: #59626e; }
.actions .export { gap: 12px; padding-left: 2px; }
.actions .rule { margin-left: -6px; margin-right: -8px; }
.actions .faint { color: #a0a5ac; }

/* toolbar */
.toolbar { display: flex; align-items: center; gap: 4px; height: 112px; padding: 0 16px; border-bottom: 2px solid #d9d9d9; }
.toolbar .rule { height: 64px; margin: 0 4px; }
.tool {
  display: flex; flex-direction: column; align-items: center; gap: 2px;
  min-width: 84px; height: 100px; padding: 10px 14px 4px;
  border-radius: 12px;
  font-size: 20px; font-weight: 600; line-height: 28px; color: #8b9097;
}
.tool svg { width: 56px; height: 56px; }
.tool.active { background: #eaf0fe; }

/* work area */
.work { display: flex; flex: 1; }
.rail { width: 96px; padding: 16px 14px 16px 16px; border-right: 2px solid #d9d9d9; display: flex; flex-direction: column; align-items: center; gap: 8px; }
.rail-btn { width: 64px; height: 64px; border-radius: 12px; display: flex; align-items: center; justify-content: center; color: #6b727c; }
.rail-btn.active { background: #eaf0fe; color: #2563eb; }
.viewport { position: relative; flex: 1; display: flex; justify-content: space-between; padding: 24px 32px 48px 24px; background: #fff; }
.scene { position: absolute; inset: 0; width: 100%; height: 100%; }
.edge { fill: none; stroke: #4d4d4d; stroke-width: 2; vector-effect: non-scaling-stroke; }
.edge-line { stroke: #4d4d4d; stroke-width: 2; vector-effect: non-scaling-stroke; }
.ghost-fill { fill: rgba(28, 165, 77, .66); }
.ghost-line { fill: none; stroke: #059139; stroke-width: 2; vector-effect: non-scaling-stroke; }

/* left panels */
.side { position: relative; width: 440px; }
.panel-head {
  display: flex; align-items: center; height: 76px; padding: 0 34px 0 33px;
  border: 2px solid #dadada; border-radius: 12px;
  background: rgba(239, 239, 239, .9);
  font-size: 28px; color: #5b646f;
}
.panel-head.tall { height: 84px; }
.panel-head span { flex: 1; margin-left: 25px; padding-bottom: 5px; }
.panel-head > svg { color: #858a91; }
.panel-head .icon-btn { width: 28px; color: #959aa1; }
.down { width: 22px; height: 14px; }
.right { width: 14px; height: 22px; }
.panel-head .right { margin: 0 3px 0 5px; }
.tree { padding: 12px 0 16px; }
.row { display: flex; align-items: center; height: 64px; padding-right: 26px; font-size: 28px; color: #78808a; }
.row span { margin-left: 10px; padding-bottom: 6px; }
.row .down, .row .right { color: #b4b9c0; }
.ico, .glyph, .state { width: 28px; height: 28px; }
.ico { filter: grayscale(1); opacity: .6; }
.state { margin-left: auto; color: #9a9fa7; }
.l1 { padding-left: 66px; }
.group { padding-left: 33px; }
.group .ico { margin-left: 19px; }
.l2 { padding-left: 98px; }
.cons { padding-left: 70px; }
.cons .glyph { margin-left: 22px; }
.current { border-left: 4px solid #2563eb; background: rgba(37, 99, 235, .1); color: #2563eb; }
.shapes { padding: 16px 0; }
.solid, .shape { color: #646c77; }
.solid { font-weight: 500; }
.solid span { margin-left: 17px; }
.solid small { margin-left: 16px; padding-bottom: 6px; font-size: 28px; font-weight: 400; color: #a3a8af; }
.shape { padding-left: 74px; }
.shape span { margin-left: 18px; }

/* right column */
.tools-col { position: relative; display: flex; flex-direction: column; align-items: flex-end; }
.gizmo-text { font-family: "Liberation Sans", Arial, sans-serif; font-size: 24px; text-anchor: middle; fill: #111; stroke: #111; stroke-width: .6; }
.gizmo-text .dim { fill: #858c80; stroke: #858c80; }
.card { width: 480px; border: 2px solid #e5e7eb; border-radius: 16px; background: #fff; box-shadow: 0 6px 10px rgba(31, 41, 55, .09); overflow: hidden; }
.card-body { display: flex; flex-direction: column; gap: 24px; padding: 32px; }
.card-title { display: flex; align-items: center; gap: 20px; height: 40px; font-size: 28px; padding-bottom: 4px; }
.title-icon { width: 32px; height: 32px; }
.field { display: flex; flex-direction: column; gap: 10px; }
.field label, .label { line-height: 38px; color: #6b727c; }
.label small { margin-left: 6px; font-size: 24px; color: #a0a5ac; }
.field input, .field select { width: 100%; height: 64px; padding: 0 24px; border: 2px solid #d1d1d1; border-radius: 8px; background: #fff; outline: 0; min-width: 0; }
.select { display: grid; align-items: center; }
.select > * { grid-area: 1 / 1; }
.select select { appearance: none; padding-bottom: 3px; }
.select svg { justify-self: end; margin-right: 34px; pointer-events: none; }
.pair { display: grid; grid-template-columns: 150px 1fr; gap: 12px; }
.picker { padding: 8px; border: 2px solid #2563eb; border-radius: 12px; }
.chip { display: flex; align-items: center; height: 68px; padding: 0 26px 0 16px; border: 2px solid #e5e7eb; border-radius: 12px; background: #f1f1f1; }
.chip .icon-btn { color: #858a92; }
.badge { width: 54px; line-height: 40px; margin-right: 12px; text-align: center; border-radius: 16px; background: #eaf0fe; color: #2563eb; }
.grow { flex: 1; padding-bottom: 3px; }
.line-ref { display: flex; align-items: center; gap: 10px; margin-right: 34px; padding-bottom: 2px; font-size: 20px; color: #9ba0a7; }
.dot { width: 16px; height: 16px; margin-right: 12px; border-radius: 50%; background: #2563eb; }
.card-foot { display: flex; padding: 24px 32px; border-top: 2px solid #e5e7eb; background: #f1f1f1; }
.card-foot button { height: 64px; padding-bottom: 3px; border-radius: 8px; font-weight: 600; }
.card-foot .primary { width: 300px; background: #2563eb; color: #fff; }
.card-foot .plain { flex: 1; padding-left: 16px; }
.snippet { margin-top: 12px; padding: 0 25px 4px; line-height: 53px; border: 2px solid #e5e7eb; border-radius: 16px; background: #fff; box-shadow: 0 6px 10px rgba(31, 41, 55, .09); font-family: "DejaVu Sans Mono", monospace; font-size: 20px; }
.status { display: flex; gap: 16px; margin: auto 32px 0 0; }
.pill { display: flex; align-items: center; justify-content: center; height: 64px; padding-bottom: 2px; border: 2px solid #dadada; border-radius: 14px; background: rgba(239, 239, 239, .88); color: #5b646f; }
.snap { width: 210px; padding: 0 25px 2px 22px; justify-content: flex-start; gap: 13px; }
.snap svg { color: #858a92; }
.snap svg:last-child { margin-left: auto; }
.unit { width: 88px; }
.scale { width: 64px; margin-left: 8px; padding: 0; color: #6b727c; }
```
